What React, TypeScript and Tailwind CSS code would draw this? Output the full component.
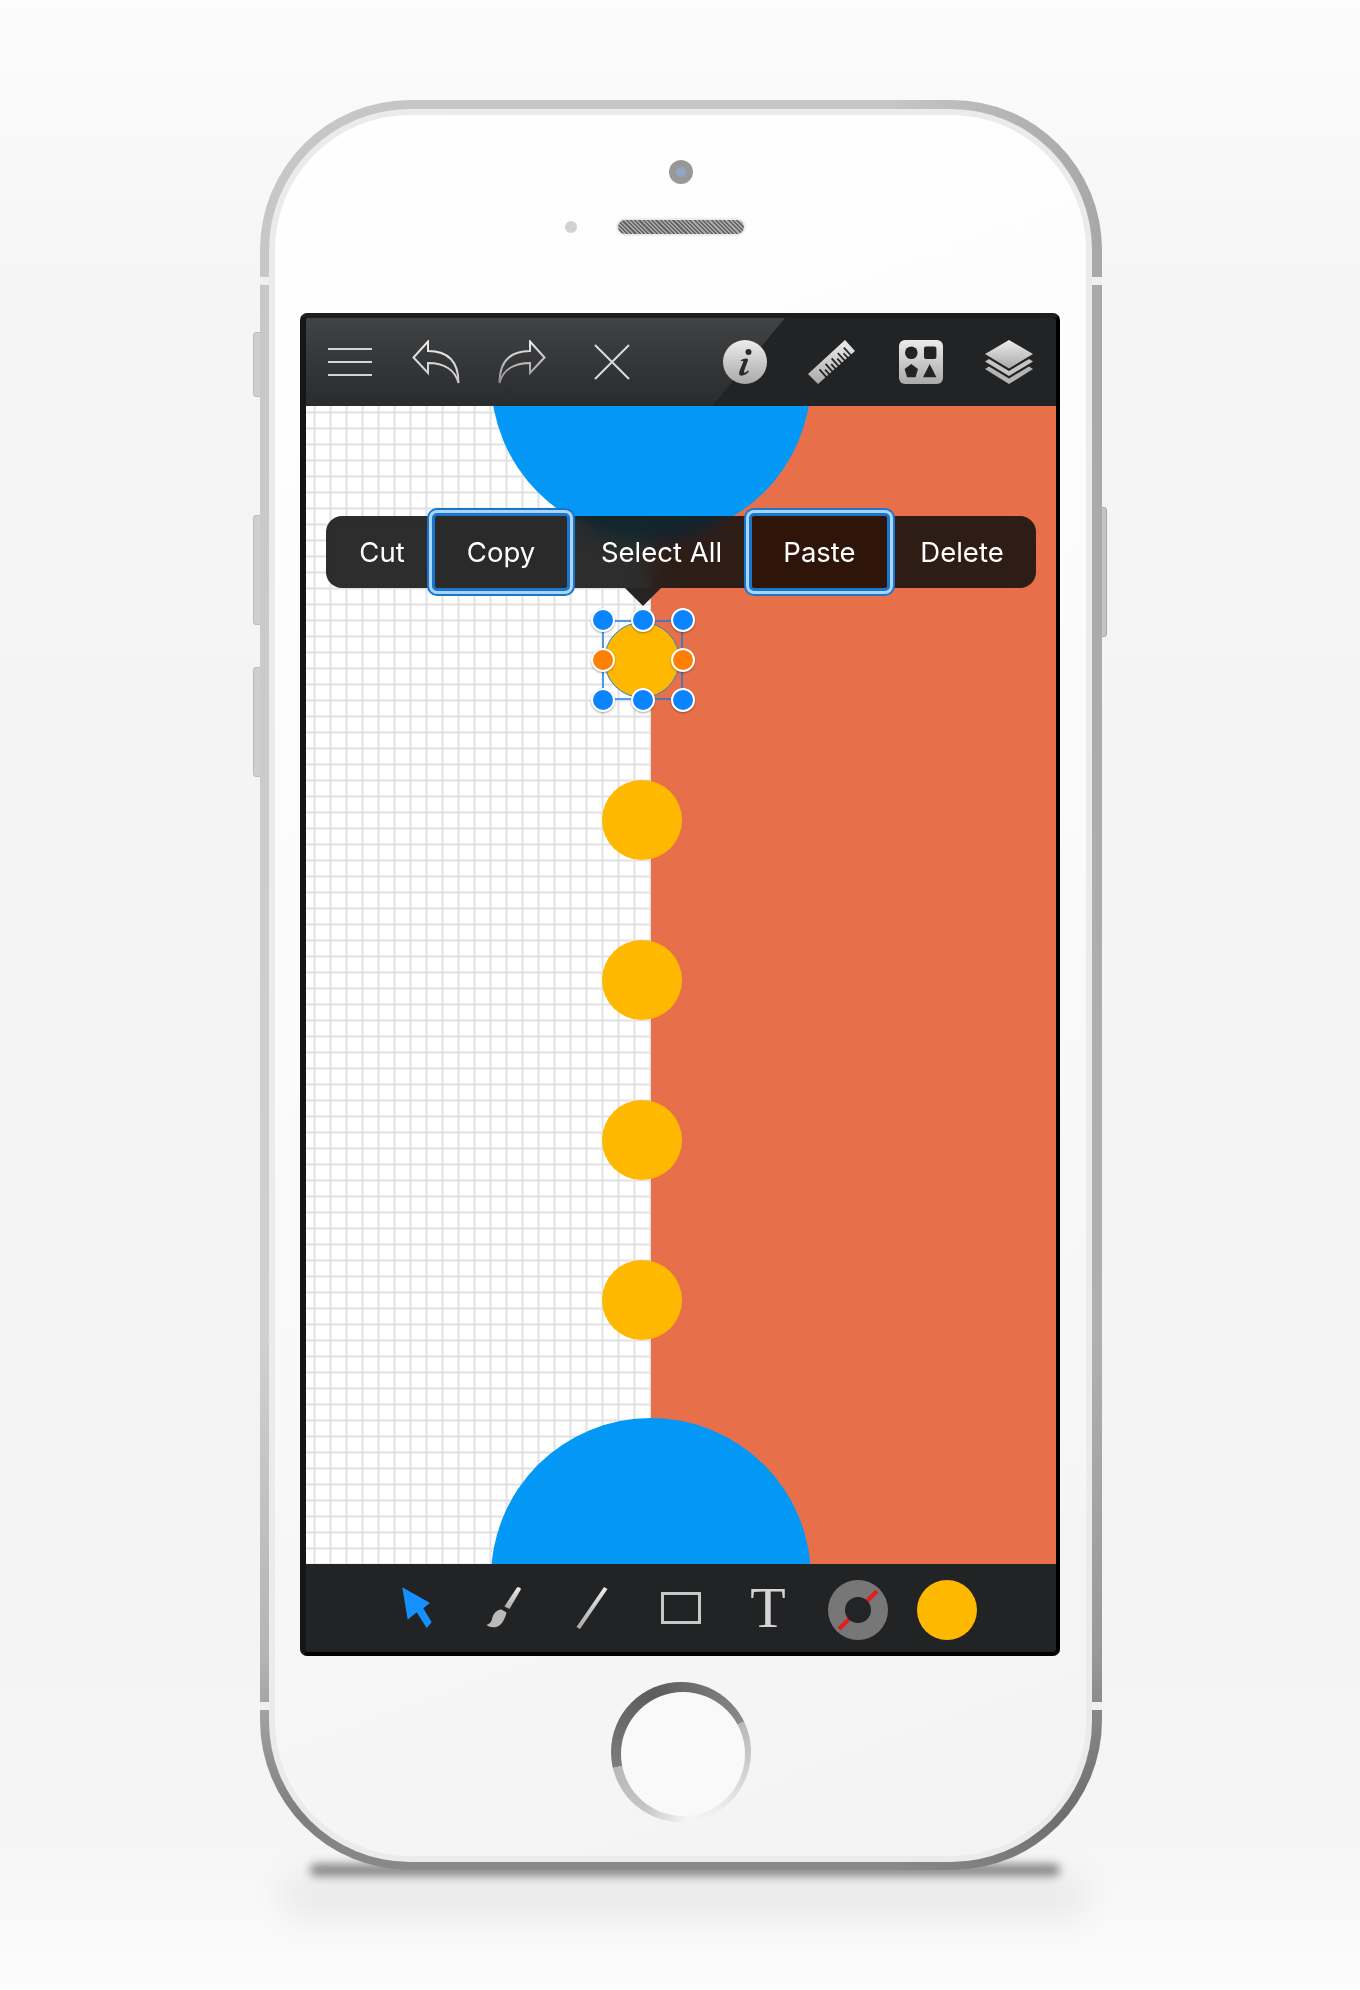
import React from "react";

const yellowTops = ["top-[374px]", "top-[534px]", "top-[694px]", "top-[854px]"];

const MenuIcon = () => (
  <svg width="45" height="30" viewBox="0 0 45 30" className="shrink-0">
    <path d="M0 2H44M0 15H44M0 28H44" stroke="#d4d4d4" strokeWidth="2" />
  </svg>
);

const ArrowBack = ({ id, flip }: { id: string; flip?: boolean }) => (
  <svg width="48" height="44" viewBox="0 0 48 44" className={flip ? "shrink-0 -scale-x-100" : "shrink-0"}>
    <defs>
      <linearGradient id={id} x1="0" y1="0" x2="0" y2="1">
        <stop offset="0" stopColor="#ececec" />
        <stop offset="1" stopColor={flip ? "#8f8f8f" : "#c8c8c8"} />
      </linearGradient>
    </defs>
    <path
      d="M1.5 17.5L16 1.5V11C36 11 46.5 22 46.5 43C43 30 32 23 16 23V33Z"
      fill="none"
      stroke={`url(#${id})`}
      strokeWidth="2"
      strokeLinejoin="miter"
    />
  </svg>
);

const CloseIcon = () => (
  <svg width="36" height="36" viewBox="0 0 36 36" className="shrink-0">
    <path d="M1 1L35 35M35 1L1 35" stroke="#dcdcdc" strokeWidth="2" />
  </svg>
);

const Metal = ({ id }: { id: string }) => (
  <defs>
    <linearGradient id={id} x1="0" y1="0" x2="0" y2="1">
      <stop offset="0" stopColor="#ececec" />
      <stop offset="1" stopColor="#a9a9a9" />
    </linearGradient>
  </defs>
);

const InfoIcon = () => (
  <svg width="44" height="44" viewBox="0 0 44 44" className="shrink-0">
    <Metal id="infoG" />
    <circle cx="22" cy="22" r="22" fill="url(#infoG)" />
    <circle cx="25.5" cy="12" r="3" fill="#2a2a2c" />
    <path
      d="M17.5 20.5C20 18.5 24.5 17.5 25 19.5C25.3 21 21 30 21 32C21 33.5 23 32.5 25 30.5L26 31.5C23.5 34.5 20 36.2 17.5 35.5C15.5 35 16 32 17.5 28.5C19 25 20.7 22 20 21C19.5 20.5 18.5 21 18 21.3Z"
      fill="#2a2a2c"
    />
  </svg>
);

const rulerTicks = Array.from({ length: 9 }, (_, i) => i);

const RulerIcon = () => (
  <svg width="54" height="50" viewBox="0 0 54 50" className="shrink-0">
    <Metal id="rulerG" />
    <path d="M40 3L50 14L13 47L3 37Z" fill="url(#rulerG)" />
    {rulerTicks.map((i) => {
      const t = 6 + i * 4.1;
      const px = 50 - 0.746 * t;
      const py = 14 + 0.665 * t;
      const len = i % 2 === 0 ? 10 : 6;
      return (
        <line
          key={i}
          x1={px + 1}
          y1={py + 1}
          x2={px - 0.665 * len}
          y2={py - 0.746 * len}
          stroke="#232325"
          strokeWidth="1.8"
        />
      );
    })}
  </svg>
);

const ShapesIcon = () => (
  <svg width="44" height="44" viewBox="0 0 44 44" className="shrink-0">
    <Metal id="shapesG" />
    <rect width="44" height="44" rx="6" fill="url(#shapesG)" />
    <circle cx="12.3" cy="12.8" r="6.3" fill="#222325" />
    <rect x="25" y="6.6" width="12.4" height="12.4" rx="2" fill="#222325" />
    <path d="M12.3 24L19 29L16.5 37.3H8.1L5.6 29Z" fill="#222325" />
    <path d="M30.7 24L37.4 37.3H24Z" fill="#222325" />
  </svg>
);

const LayersIcon = () => (
  <svg width="48" height="44" viewBox="0 0 48 44" className="shrink-0">
    <Metal id="layersG" />
    <path d="M24 0L48 14L24 28.5L0 14Z" fill="url(#layersG)" />
    <path d="M4 19L24 31L44 19L48 21.5L24 36L0 21.5Z" fill="#c4c4c4" />
    <path d="M4 26.5L24 38.5L44 26.5L48 29L24 44L0 29Z" fill="#b4b4b4" />
  </svg>
);

const PointerIcon = () => (
  <svg width="34" height="46" viewBox="0 0 34 46" className="shrink-0">
    <path d="M2.3 2.3L30 18L23.3 23.3L31.7 37.3L26.7 43L16.7 27.3L7.7 34.7Z" fill="#1690ff" />
  </svg>
);

const BrushIcon = () => (
  <svg width="38" height="46" viewBox="0 0 38 46" className="shrink-0">
    <Metal id="brushG" />
    <path d="M32 2.6C33.5 1.8 36 2.6 35.8 4.4L24.5 24L19.4 21.5Z" fill="url(#brushG)" />
    <path d="M16.5 24.5C11 25 8 29 7 34C6.6 37 4.5 39 1.5 40C5 42.5 11 43.5 15 40C18.5 37 20.5 32 21.5 27.5Z" fill="#b9b9b9" />
  </svg>
);

const LineIcon = () => (
  <svg width="32" height="42" viewBox="0 0 32 42" className="shrink-0">
    <Metal id="lineG" />
    <path d="M28 0L31.5 2L4 42L0.5 40Z" fill="url(#lineG)" />
  </svg>
);

const RectIcon = () => (
  <svg width="40" height="32" viewBox="0 0 40 32" className="shrink-0">
    <rect x="1.5" y="1.5" width="37" height="29" fill="none" stroke="#c8c8c8" strokeWidth="3" />
  </svg>
);

const StrokeDisc = () => (
  <svg width="60" height="60" viewBox="0 0 60 60" className="shrink-0">
    <circle cx="30" cy="30" r="30" fill="#777778" />
    <path d="M49 11L11 49" stroke="#e0201c" strokeWidth="4.5" />
    <circle cx="30" cy="30" r="13" fill="#232426" />
  </svg>
);

const Handle = ({ orange }: { orange?: boolean }) => (
  <div
    className={`w-[24px] h-[24px] rounded-full border-[2.5px] border-white shadow-[0_1px_2px_rgba(0,0,0,0.35)] ${
      orange ? "bg-[#ff8000]" : "bg-[#0a84ff]"
    }`}
  />
);

export default function App() {
  return (
    <div className="relative w-[1360px] h-[1990px] overflow-hidden pt-[100px] pl-[260px] bg-[linear-gradient(to_bottom,#fcfcfc_0%,#f5f5f5_15%,#f3f3f3_70%,#f5f5f5_92%,#fcfcfc_100%)] [font-family:Inter,'Noto_Sans',sans-serif]">
      {/* shadow under the phone */}
      <div className="absolute left-[310px] top-[1864px] w-[750px] h-[12px] rounded-full bg-black/45 blur-[5px]" />
      <div className="absolute left-[280px] top-[1872px] w-[810px] h-[50px] rounded-full bg-black/5 blur-[16px]" />

      {/* side buttons */}
      <div className="absolute left-[253px] top-[332px] w-[9px] h-[65px] rounded-l-[3px] border border-[#bbb] bg-[#cfcfcf]" />
      <div className="absolute left-[253px] top-[515px] w-[9px] h-[110px] rounded-l-[3px] border border-[#bbb] bg-[#cfcfcf]" />
      <div className="absolute left-[253px] top-[667px] w-[9px] h-[110px] rounded-l-[3px] border border-[#bbb] bg-[#cfcfcf]" />
      <div className="absolute left-[1098px] top-[507px] w-[9px] h-[130px] rounded-r-[3px] border border-[#a8a8a8] bg-[#c4c4c4]" />

      <div className="relative w-[842px] h-[1770px] rounded-[150px] pt-[9px] pl-[9px] pr-[10px] pb-[8px] bg-[linear-gradient(90deg,transparent_75%,rgba(0,0,0,0.16)_100%),linear-gradient(to_bottom,#c6c6c6_0%,#d0d0d0_70%,#b4b4b4_88%,#7e7e7e_97%,#8a8a8a_100%)]">
        <div className="absolute left-0 top-[177px] w-[9px] h-[8px] bg-[#f0f0f0]" />
        <div className="absolute right-0 top-[177px] w-[10px] h-[8px] bg-[#f0f0f0]" />
        <div className="absolute left-0 top-[1602px] w-[9px] h-[8px] bg-[#f0f0f0]" />
        <div className="absolute right-0 top-[1602px] w-[10px] h-[8px] bg-[#f0f0f0]" />

        <div className="w-full h-full rounded-[141px] p-[6px] bg-[#ebebeb]">
          <div className="w-full h-full rounded-[135px] flex flex-col bg-[linear-gradient(160deg,#ffffff_0%,#fbfbfb_45%,#f3f3f3_100%)]">
            {/* earpiece */}
            <div className="h-[198px] shrink-0 flex flex-col items-center pt-[45px]">
              <div className="w-[24px] h-[24px] rounded-full bg-[#989898] flex items-center justify-center">
                <div className="w-[10px] h-[10px] rounded-full bg-[#8fa6c4]" />
              </div>
              <div className="mt-[34px] flex items-center gap-[39px]">
                <div className="w-[12px] h-[12px] rounded-full bg-[#d2d2d2]" />
                <div className="w-[130px] h-[18px] rounded-full border-2 border-[#ececec] bg-[repeating-linear-gradient(45deg,#666_0px,#666_1.5px,#a8a8a8_1.5px,#a8a8a8_3px)]" />
                <div className="w-[12px] h-[12px]" />
              </div>
            </div>

            {/* screen */}
            <div className="ml-[25px] w-[760px] h-[1343px] shrink-0 rounded-[7px] bg-black border-l-[6px] border-l-[#161616] border-r-[4px] border-r-black border-t-[5px] border-t-[#1d1d1e] border-b-[4px] border-b-black flex flex-col overflow-hidden">
              {/* top toolbar */}
              <div className="relative h-[88px] shrink-0 bg-[#222325]">
                <div className="absolute inset-0 bg-[linear-gradient(to_bottom,#414244_0%,#2a2b2d_100%)] [clip-path:polygon(0_0,479px_0,406px_100%,0_100%)]" />
                <div className="relative h-full flex items-center">
                  <div className="ml-[22px]"><MenuIcon /></div>
                  <div className="ml-[39px]"><ArrowBack id="undoG" /></div>
                  <div className="ml-[38px]"><ArrowBack id="redoG" flip /></div>
                  <div className="ml-[48px]"><CloseIcon /></div>
                  <div className="ml-[93px]"><InfoIcon /></div>
                  <div className="ml-[38px]"><RulerIcon /></div>
                  <div className="ml-[40px]"><ShapesIcon /></div>
                  <div className="ml-[42px]"><LayersIcon /></div>
                </div>
              </div>

              {/* canvas */}
              <div className="relative h-[1158px] shrink-0 flex overflow-hidden">
                <div className="w-[345px] h-full bg-white bg-[linear-gradient(to_right,#e1e1e1_2px,transparent_2px),linear-gradient(to_bottom,#e1e1e1_2px,transparent_2px)] bg-size-[16px_16px] bg-position-[7.5px_5.5px]" />
                <div className="flex-1 h-full bg-[#e7704a]" />

                <div className="absolute left-[185px] top-[-187px] w-[320px] h-[320px] rounded-full bg-[#0398f6]" />
                <div className="absolute left-[185px] top-[1012px] w-[320px] h-[320px] rounded-full bg-[#0398f6]" />

                {yellowTops.map((top) => (
                  <div key={top} className={`absolute left-[296px] w-[80px] h-[80px] rounded-full bg-[#ffb800] ${top}`} />
                ))}

                {/* selected shape */}
                <div className="absolute left-[298px] top-[216px] w-[76px] h-[76px] rounded-full bg-[#ffb800] border-[1.5px] border-[#2a7fd0]" />
                <div className="absolute left-[296px] top-[214px] w-[81px] h-[80px] border-2 border-[#0a78f0]/70" />
                <div className="absolute left-[285px] top-[202px] w-[104px] h-[104px] grid grid-cols-[24px_24px_24px] grid-rows-[24px_24px_24px] justify-between content-between">
                  <Handle />
                  <Handle />
                  <Handle />
                  <Handle orange />
                  <div />
                  <Handle orange />
                  <Handle />
                  <Handle />
                  <Handle />
                </div>

                {/* edit menu */}
                <div className="absolute left-[20px] top-[110px] w-[710px] h-[72px] rounded-[16px] bg-[#161616]/90 backdrop-blur-md backdrop-saturate-200 flex items-center text-white text-[27.5px]">
                  <div className="w-[101px] pl-[11px] pt-[2px] text-center">Cut</div>
                  <div className="ml-[5px] mr-[5px] pt-[2px] w-[138px] h-[78px] shrink-0 rounded-[5px] border-[3px] border-[#1b75c9] shadow-[0_0_0_3px_#a9d4fb,0_0_0_5px_#1b75c9] bg-[#2a2a2a] flex items-center justify-center">
                    Copy
                  </div>
                  <div className="w-[169px] pl-[4px] pt-[2px] text-center">Select All</div>
                  <div className="ml-[5px] mr-[5px] pt-[2px] w-[141px] h-[78px] shrink-0 rounded-[5px] border-[3px] border-[#1b75c9] shadow-[0_0_0_3px_#a9d4fb,0_0_0_5px_#1b75c9] bg-[#2e1409] flex items-center justify-center">
                    Paste
                  </div>
                  <div className="w-[141px] pr-[7px] pt-[2px] text-center">Delete</div>
                  <div className="absolute left-[299px] top-[72px] w-0 h-0 border-l-[18px] border-r-[18px] border-t-[18px] border-l-transparent border-r-transparent border-t-[#262320]" />
                </div>
              </div>

              {/* bottom toolbar */}
              <div className="h-[88px] shrink-0 bg-[#222325] flex items-center">
                <div className="ml-[94px]"><PointerIcon /></div>
                <div className="ml-[51px]"><BrushIcon /></div>
                <div className="ml-[53px]"><LineIcon /></div>
                <div className="ml-[53px]"><RectIcon /></div>
                <div className="ml-[47px] w-[40px] text-center text-[58px] leading-none text-[#d4d4d4] [font-family:'Liberation_Serif',serif] font-normal">T</div>
                <div className="ml-[40px] mt-[4px]"><StrokeDisc /></div>
                <div className="ml-[29px] mt-[4px] w-[60px] h-[60px] rounded-full bg-[#ffb800]" />
              </div>
            </div>

            {/* home button */}
            <div className="mt-[26px] flex justify-center">
              <div className="w-[140px] h-[140px] rounded-full pl-[10px] pt-[10px] bg-[conic-gradient(from_64deg,#b8b8b8_0deg,#c8c8c8_30deg,#ececec_80deg,#f6f6f6_110deg,#c4c4c4_150deg,#b8b8b8_193deg,#7c7c7c_193deg,#5c5c5c_270deg,#6a6a6a_300deg,#8a8a8a_360deg)]">
                <div className="w-[124px] h-[124px] rounded-full bg-[#f9f9f9]" />
              </div>
            </div>
          </div>
        </div>
      </div>
    </div>
  );
}
